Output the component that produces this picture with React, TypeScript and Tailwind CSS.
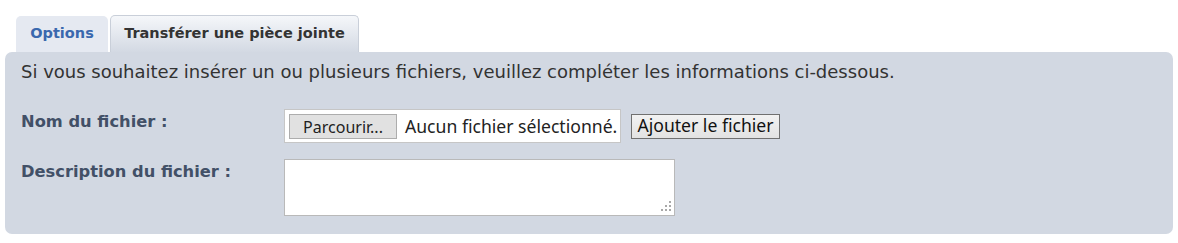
export default function App() {
  return (
    <div className="w-[1178px] h-[243px] bg-white font-['DejaVu_Sans',Verdana,sans-serif] text-[#333333]">
      <div className="pt-[15px] px-[5px]">
        {/* Tabs */}
        <div className="flex items-end pl-[11px] gap-[2px]">
          <div className="h-[36px] w-[92px] flex items-center justify-center rounded-t-[5px] bg-[#e5e9f1] text-[14.5px] font-bold text-[#3a68ae]">
            Options
          </div>
          <div className="h-[37px] w-[249px] flex items-center justify-center rounded-t-[5px] border border-b-0 border-[#c9cfd9] bg-gradient-to-b from-[#f5f7fa] to-[#d3d9e3] text-[14.5px] font-bold text-[#333333]">
            Transférer une pièce jointe
          </div>
        </div>

        {/* Panel */}
        <div className="h-[182px] rounded-[7px] bg-[#d2d8e2] px-[16px] pt-[9px]">
          <p className="text-[18px] leading-[22px]">
            Si vous souhaitez insérer un ou plusieurs fichiers, veuillez compléter les informations ci-dessous.
          </p>

          <div className="mt-[26px] flex items-start">
            <label className="w-[263px] pt-[1px] text-[16.3px] font-bold text-[#425067]">Nom du fichier :</label>
            <div className="flex items-center">
              <div className="flex items-center h-[34px] w-[337px] border border-[#c6c6c6] bg-white pl-[4px] font-['Noto_Sans',sans-serif] text-[#222]">
                <button className="h-[25px] w-[108px] border border-[#adadad] bg-[#e1e1e1] text-[16px]">Parcourir...</button>
                <span className="ml-[8px] text-[17.6px] whitespace-nowrap">Aucun fichier sélectionné.</span>
              </div>
              <button className="ml-[10px] h-[25px] w-[149px] border border-[#707070] bg-gradient-to-b from-[#f2f2f2] to-[#e2e2e2] font-['Noto_Sans',sans-serif] text-[17.6px] leading-none text-[#111]">
                Ajouter le fichier
              </button>
            </div>
          </div>

          <div className="mt-[16px] flex items-start">
            <label className="w-[263px] pt-[1px] text-[16.3px] font-bold text-[#425067]">Description du fichier :</label>
            <div className="relative">
              <textarea className="block h-[57px] w-[391px] resize-none border border-[#b9b9b9] bg-white" />
              {/* resize grip */}
              <div className="absolute right-[4px] bottom-[5px] grid grid-cols-3 gap-[2px]">
                <span className="size-[2px]" />
                <span className="size-[2px]" />
                <span className="size-[2px] bg-[#a8a8a8]" />
                <span className="size-[2px]" />
                <span className="size-[2px] bg-[#a8a8a8]" />
                <span className="size-[2px] bg-[#a8a8a8]" />
                <span className="size-[2px] bg-[#a8a8a8]" />
                <span className="size-[2px] bg-[#a8a8a8]" />
                <span className="size-[2px] bg-[#a8a8a8]" />
              </div>
            </div>
          </div>
        </div>
      </div>
    </div>
  );
}
